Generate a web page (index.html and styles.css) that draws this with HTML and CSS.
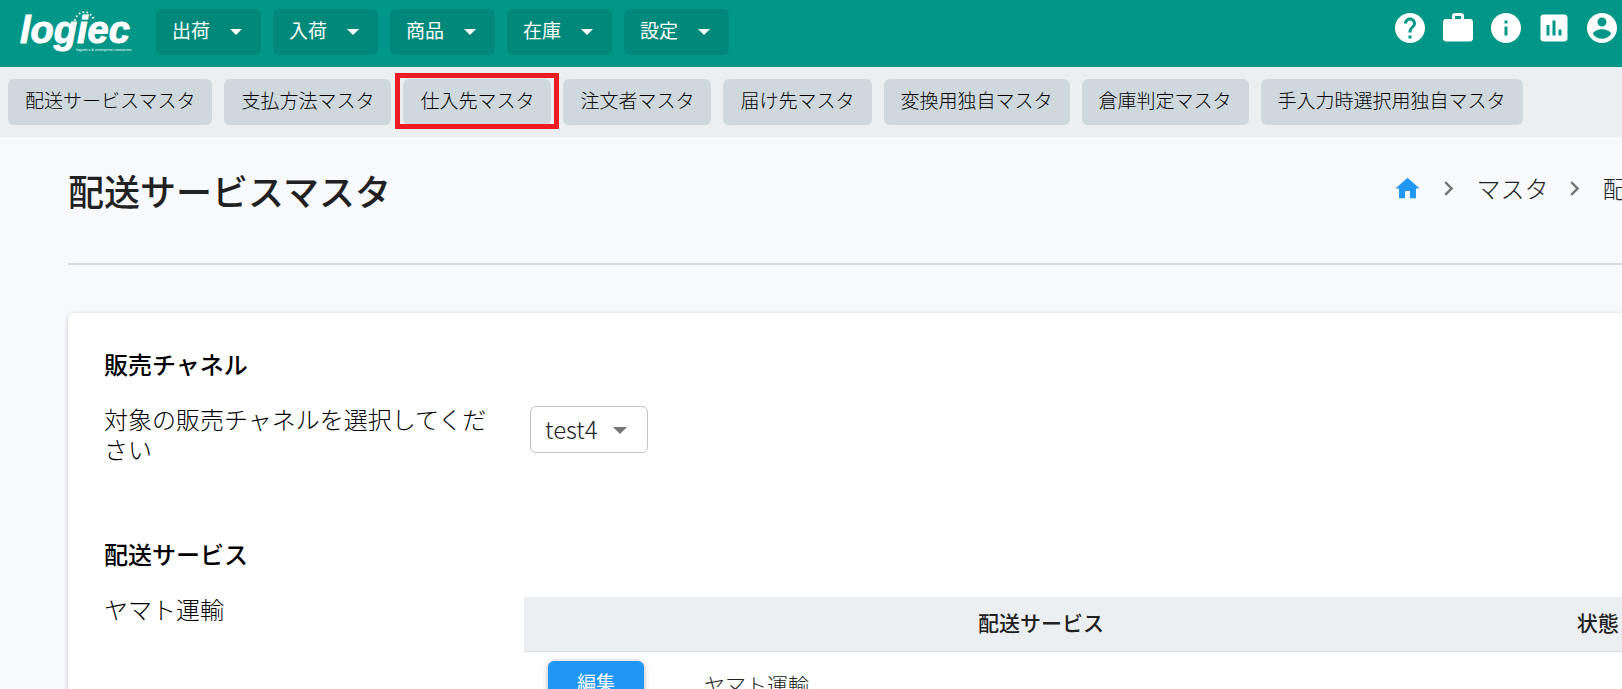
FILE: index.html
```html
<!DOCTYPE html>
<html lang="ja">
<head>
<meta charset="utf-8">
<title>配送サービスマスタ</title>
<link rel="stylesheet" href="styles.css">
</head>
<body>
<header class="topbar">
  <a class="logo" href="#" aria-label="logiec">
    <svg width="116" height="46" viewBox="0 0 116 46" fill="#fff">
      <text class="logo-name" x="2" y="34">logiec</text>
      <text class="logo-tag" x="58" y="42">logistics &amp; enterprise connector</text>
      <path d="M57 11C60 1 72 0 76 11" fill="none" stroke="#fff" stroke-width="2" stroke-linecap="round" stroke-dasharray="0 4"/>
    </svg>
  </a>
  <nav class="menu">
    <button class="menu-button" type="button">出荷<span class="caret"></span></button>
    <button class="menu-button" type="button">入荷<span class="caret"></span></button>
    <button class="menu-button" type="button">商品<span class="caret"></span></button>
    <button class="menu-button" type="button">在庫<span class="caret"></span></button>
    <button class="menu-button" type="button">設定<span class="caret"></span></button>
  </nav>
  <div class="tools">
    <button class="tool" type="button" aria-label="ヘルプ"><svg viewBox="0 0 24 24"><path d="M12 2C6.48 2 2 6.48 2 12s4.480 10 10 10 10-4.480 10-10S17.520 2 12 2zm1 17h-2v-2h2v2zm2.070-7.750l-.9.920C13.450 12.900 13 13.500 13 15h-2v-.5c0-1.100.45-2.100 1.170-2.830l1.240-1.260c.37-.36.590-.86.590-1.410 0-1.100-.9-2-2-2s-2 .9-2 2H8c0-2.210 1.790-4 4-4s4 1.790 4 4c0 .88-.36 1.680-.93 2.250z"/></svg></button>
    <button class="tool" type="button" aria-label="業務"><svg viewBox="0 0 24 24"><path d="M20 6h-4V4c0-1.110-.89-2-2-2h-4c-1.110 0-2 .89-2 2v2H4c-1.110 0-2 .89-2 2v11c0 1.110.89 2 2 2h16c1.110 0 2-.89 2-2V8c0-1.110-.89-2-2-2zm-6 0h-4V4h4v2z"/></svg></button>
    <button class="tool" type="button" aria-label="情報"><svg viewBox="0 0 24 24"><path d="M12 2C6.480 2 2 6.480 2 12s4.480 10 10 10 10-4.480 10-10S17.520 2 12 2zm1 15h-2v-6h2v6zm0-8h-2V7h2v2z"/></svg></button>
    <button class="tool" type="button" aria-label="集計"><svg viewBox="0 0 24 24"><path d="M19 3H5c-1.100 0-2 .9-2 2v14c0 1.100.9 2 2 2h14c1.100 0 2-.9 2-2V5c0-1.100-.9-2-2-2zM9 17H7v-7h2v7zm4 0h-2V7h2v10zm4 0h-2v-4h2v4z"/></svg></button>
    <button class="tool" type="button" aria-label="アカウント"><svg viewBox="0 0 24 24"><path d="M12 2C6.480 2 2 6.480 2 12s4.480 10 10 10 10-4.480 10-10S17.520 2 12 2zm0 3c1.660 0 3 1.340 3 3s-1.340 3-3 3-3-1.340-3-3 1.340-3 3-3zm0 14.200c-2.500 0-4.710-1.280-6-3.220.03-1.990 4-3.080 6-3.080 1.990 0 5.970 1.090 6 3.080-1.290 1.940-3.500 3.220-6 3.220z"/></svg></button>
  </div>
</header>
<nav class="subnav">
  <a class="subnav-link" href="#">配送サービスマスタ</a>
  <a class="subnav-link" href="#">支払方法マスタ</a>
  <a class="subnav-link marked" href="#">仕入先マスタ</a>
  <a class="subnav-link" href="#">注文者マスタ</a>
  <a class="subnav-link" href="#">届け先マスタ</a>
  <a class="subnav-link" href="#">変換用独自マスタ</a>
  <a class="subnav-link" href="#">倉庫判定マスタ</a>
  <a class="subnav-link" href="#">手入力時選択用独自マスタ</a>
</nav>
<main class="page">
  <div class="page-head">
    <h1 class="page-title">配送サービスマスタ</h1>
    <nav class="crumbs">
      <a class="crumb-home" href="#" aria-label="ホーム"><svg width="29" height="29" viewBox="0 0 24 24" fill="#2196f3"><path d="M10 20v-6h4v6h5v-8h3L12 3 2 12h3v8z"/></svg></a>
      <svg class="chevron" width="29" height="29" viewBox="0 0 24 24"><path d="M10 6L8.590 7.410 13.170 12l-4.580 4.590L10 18l6-6z"/></svg>
      <a class="crumb" href="#">マスタ</a>
      <svg class="chevron" width="29" height="29" viewBox="0 0 24 24"><path d="M10 6L8.590 7.410 13.170 12l-4.580 4.590L10 18l6-6z"/></svg>
      <span class="crumb">配送サービスマスタ</span>
    </nav>
  </div>
  <div class="card">
    <section class="block">
      <h2 class="block-title">販売チャネル</h2>
      <div class="block-body">
        <label class="block-text" for="channel">対象の販売チャネルを選択してください</label>
        <div class="select-wrap">
          <select class="select" id="channel"><option>test4</option></select>
          <span class="select-arrow"></span>
        </div>
      </div>
    </section>
    <section class="block">
      <h2 class="block-title">配送サービス</h2>
      <div class="block-body">
        <p class="block-text">ヤマト運輸</p>
        <table class="table">
          <colgroup><col class="col-action"><col class="col-service"><col class="col-state"></colgroup>
          <thead><tr><th></th><th>配送サービス</th><th>状態</th></tr></thead>
          <tbody><tr><td><button class="edit" type="button">編集</button></td><td>ヤマト運輸</td><td></td></tr></tbody>
        </table>
      </div>
    </section>
  </div>
</main>
</body>
</html>
```
FILE: styles.css
```css
* { box-sizing: border-box; }
html { overflow: hidden; }
body {
  margin: 0;
  background: #f8f9fd;
  color: #000;
  font-family: "Noto Sans CJK JP", sans-serif;
  font-size: 24px;
  font-weight: 300;
  line-height: 30px;
}
a { color: inherit; text-decoration: none; }
button, select { font: inherit; color: inherit; }
h1, h2, p { margin: 0; }

.topbar {
  display: flex;
  align-items: flex-start;
  padding: 9px 2px 12px 18px;
  background: #009688;
  color: #fff;
}
.logo { width: 138px; height: 46px; }
.logo svg { display: block; }
.logo-name {
  font: italic bold 38px "Liberation Sans", sans-serif;
  stroke: #fff;
  stroke-width: 1px;
}
.logo-tag { font: 4px "Liberation Sans", sans-serif; }
.menu { display: flex; gap: 12px; }
.menu-button {
  display: flex;
  align-items: center;
  gap: 20px;
  height: 46px;
  padding: 0 19px 4px 16px;
  border: 0;
  border-radius: 6px;
  background: #00897b;
  font-size: 19px;
  font-weight: 400;
}
.caret {
  margin-top: 4px;
  border: solid transparent;
  border-width: 6px 6px 0;
  border-top-color: #fff;
}
.tools { display: flex; gap: 12px; margin-left: auto; padding-top: 1px; }
.tool { padding: 0; border: 0; background: none; }
.tool svg { display: block; width: 36px; height: 36px; fill: #fff; }

.subnav {
  display: flex;
  gap: 12px;
  padding: 12px 8px;
  background: #eceff1;
}
.subnav-link {
  position: relative;
  height: 46px;
  padding: 0 17px;
  border-radius: 6px;
  background: #cfd8dc;
  font-size: 19px;
  line-height: 42px;
  white-space: nowrap;
}
.marked::after {
  content: "";
  position: absolute;
  inset: -6px -8px -4px -8px;
  border: 5px solid #ed1c24;
}

.page { width: 117%; padding: 0 68px; }
.page-head {
  display: flex;
  justify-content: space-between;
  align-items: flex-start;
  height: 128px;
  padding: 30px 12px 0 0;
  border-bottom: 2px solid #dadcdf;
  color: #212121;
}
.page-title { font-size: 36px; font-weight: 500; line-height: 46px; }
.crumbs { display: flex; align-items: center; }
.crumb { line-height: 42px; }
.crumb-home svg, .chevron { display: block; }
.chevron { margin: 0 13px 0 12px; fill: #757575; }

.card {
  margin-top: 48px;
  padding: 36px;
  border-radius: 6px;
  background: #fff;
  box-shadow: 0 1px 4px rgba(0, 0, 0, .22);
}
.block { margin-bottom: 75px; }
.block-title { font-size: 24px; font-weight: 500; line-height: 30px; }
.block-body {
  display: grid;
  grid-template-columns: 396px 1fr;
  column-gap: 24px;
  align-items: start;
  padding-top: 25px;
}
.select-wrap { position: relative; justify-self: start; margin: 2px 6px 0; }
.select {
  display: block;
  width: 118px;
  height: 47px;
  padding: 0 15px 2px 14px;
  border: 1px solid #c4c4c4;
  border-radius: 6px;
  background: #fff;
  color: #212121;
  appearance: none;
}
.select-arrow {
  position: absolute;
  top: 21px;
  right: 21px;
  border: solid transparent;
  border-width: 7px 7px 0;
  border-top-color: #757575;
  pointer-events: none;
}

.table {
  width: 100%;
  margin-top: 3px;
  table-layout: fixed;
  border-collapse: collapse;
  color: #212121;
  font-size: 21px;
}
.col-action { width: 156px; }
.col-service { width: 722px; }
.table th {
  height: 54px;
  padding: 0 24px 4px;
  background: #eceff1;
  border-bottom: 1px solid #dadee0;
  font-weight: 500;
}
.table td { padding: 9px 24px; }
.edit {
  display: block;
  width: 96px;
  height: 46px;
  padding: 0 0 4px;
  border: 0;
  border-radius: 6px;
  background: #2196f3;
  box-shadow: 0 1px 6px rgba(0, 0, 0, .3);
  color: #fff;
  font-size: 19px;
  font-weight: 400;
}
```
